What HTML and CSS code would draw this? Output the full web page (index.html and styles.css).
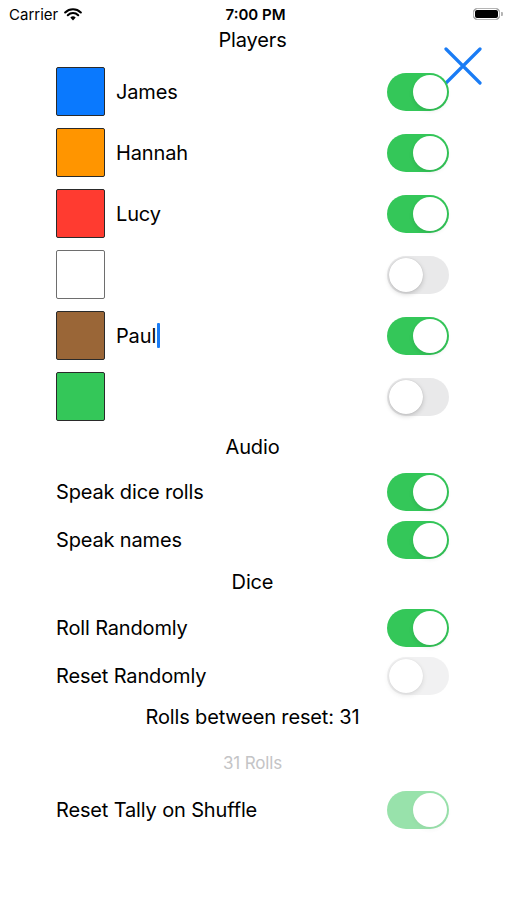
FILE: index.html
```html
<!DOCTYPE html>
<html lang="en">
<head>
    <meta charset="UTF-8">
    <meta name="viewport" content="width=device-width, initial-scale=1.0">
    <title>Players</title>
    <link rel="stylesheet" href="styles.css">
</head>
<body>
    <div class="status-bar">
        <div class="carrier">
            Carrier
            <svg class="wifi" width="18" height="13" viewBox="0 0 18 13">
                <path d="M9 12.5 L6.3 9.6 A3.9 3.9 0 0 1 11.7 9.6 Z" fill="#000"/>
                <path d="M3.8 7.2 A7.4 7.4 0 0 1 14.2 7.2" fill="none" stroke="#000" stroke-width="2.1" stroke-linecap="round"/>
                <path d="M1.2 4.4 A11.2 11.2 0 0 1 16.8 4.4" fill="none" stroke="#000" stroke-width="2.1" stroke-linecap="round"/>
            </svg>
        </div>
        <div class="clock">7:00 PM</div>
        <div class="battery"><span class="battery-level"></span></div>
    </div>

    <div class="page">
        <svg class="close" width="38" height="38" viewBox="0 0 38 38">
            <path d="M2 2 L36 36 M36 2 L2 36" stroke="#1a7cf5" stroke-width="3.2" stroke-linecap="round"/>
        </svg>

        <h2 class="section-title players-title">Players</h2>

        <div class="player-row">
            <span class="swatch" style="background:#0a79fe"></span>
            <span class="player-name">James</span>
            <span class="toggle on"></span>
        </div>
        <div class="player-row">
            <span class="swatch" style="background:#ff9500"></span>
            <span class="player-name">Hannah</span>
            <span class="toggle on"></span>
        </div>
        <div class="player-row">
            <span class="swatch" style="background:#ff3b30"></span>
            <span class="player-name">Lucy</span>
            <span class="toggle on"></span>
        </div>
        <div class="player-row">
            <span class="swatch empty" style="background:#ffffff"></span>
            <span class="player-name"></span>
            <span class="toggle"></span>
        </div>
        <div class="player-row">
            <span class="swatch" style="background:#9a6637"></span>
            <span class="player-name">Paul<span class="caret"></span></span>
            <span class="toggle on"></span>
        </div>
        <div class="player-row">
            <span class="swatch" style="background:#34c759"></span>
            <span class="player-name"></span>
            <span class="toggle"></span>
        </div>

        <h2 class="section-title audio-title">Audio</h2>
        <div class="setting-row">
            <span>Speak dice rolls</span>
            <span class="toggle on"></span>
        </div>
        <div class="setting-row">
            <span>Speak names</span>
            <span class="toggle on"></span>
        </div>

        <h2 class="section-title dice-title">Dice</h2>
        <div class="setting-row">
            <span>Roll Randomly</span>
            <span class="toggle on"></span>
        </div>
        <div class="setting-row">
            <span>Reset Randomly</span>
            <span class="toggle faint"></span>
        </div>
        <div class="rolls-label">Rolls between reset: 31</div>
        <div class="rolls-field">31 Rolls</div>
        <div class="setting-row">
            <span>Reset Tally on Shuffle</span>
            <span class="toggle on disabled"></span>
        </div>
    </div>
</body>
</html>
```

FILE: styles.css
```css
body {
    margin: 0;
    background: #fff;
    color: #000;
    font-family: Inter, "Liberation Sans", sans-serif;
}
.status-bar {
    height: 28px;
    display: flex;
    align-items: center;
    justify-content: space-between;
    padding: 0 7px 0 9px;
    font-size: 15px;
    position: relative;
}
.carrier {
    display: flex;
    align-items: center;
    gap: 6px;
    width: 120px;
}
.clock {
    font-weight: 600;
    margin-left: 2px;
}
.battery {
    width: 120px;
    display: flex;
    justify-content: flex-end;
}
.battery-level {
    width: 25px;
    height: 10px;
    border: 1.5px solid #b5b5b5;
    border-radius: 4px;
    background: #000;
    box-shadow: inset 0 0 0 1px #fff;
    position: relative;
}
.battery-level::after {
    content: "";
    position: absolute;
    right: -4px;
    top: 3px;
    width: 2px;
    height: 4px;
    background: #b5b5b5;
    border-radius: 0 1px 1px 0;
}
.page {
    padding: 0 58px 0 56px;
    position: relative;
    letter-spacing: -0.15px;
}
.close {
    position: absolute;
    top: 19px;
    right: 25px;
}
.section-title {
    margin: 0;
    font-size: 20px;
    font-weight: 400;
    text-align: center;
    display: flex;
    align-items: center;
    justify-content: center;
}
.players-title {
    height: 24px;
    margin-bottom: 9px;
}
.audio-title {
    height: 39px;
    margin-bottom: 2px;
}
.dice-title {
    height: 36px;
    margin-bottom: 4px;
}
.player-row {
    height: 61px;
    display: flex;
    align-items: center;
}
.swatch {
    width: 47px;
    height: 47px;
    border: 1.5px solid #2a2a2a;
    border-radius: 2px;
}
.swatch.empty {
    border-color: #6e6e6e;
}
.player-name {
    flex: 1;
    margin-left: 11px;
    font-size: 20px;
    display: flex;
    align-items: center;
}
.caret {
    display: inline-block;
    width: 2.5px;
    height: 25px;
    margin-left: 1px;
    background: #1a7cf5;
    border-radius: 1px;
}
.setting-row {
    height: 48px;
    display: flex;
    align-items: center;
    justify-content: space-between;
    font-size: 20px;
}
.rolls-label {
    height: 34px;
    display: flex;
    align-items: center;
    justify-content: center;
    font-size: 20px;
}
.rolls-field {
    height: 46px;
    padding-top: 6px;
    display: flex;
    align-items: center;
    justify-content: center;
    font-size: 17px;
    color: #c4c4c6;
}
.toggle {
    width: 62px;
    height: 38px;
    border-radius: 19px;
    background: #e9e9ea;
    position: relative;
    flex-shrink: 0;
}
.toggle::after {
    content: "";
    position: absolute;
    top: 2px;
    left: 2px;
    width: 34px;
    height: 34px;
    border-radius: 50%;
    background: #fff;
    box-shadow: 0 2px 5px rgba(0, 0, 0, 0.18), 0 0 1px rgba(0, 0, 0, 0.2);
}
.toggle.on {
    background: #34c759;
}
.toggle.on::after {
    left: 26px;
    box-shadow: 0 2px 4px rgba(0, 0, 0, 0.1);
}
.toggle.disabled {
    opacity: 0.5;
}
.toggle.faint {
    opacity: 0.6;
}
```
